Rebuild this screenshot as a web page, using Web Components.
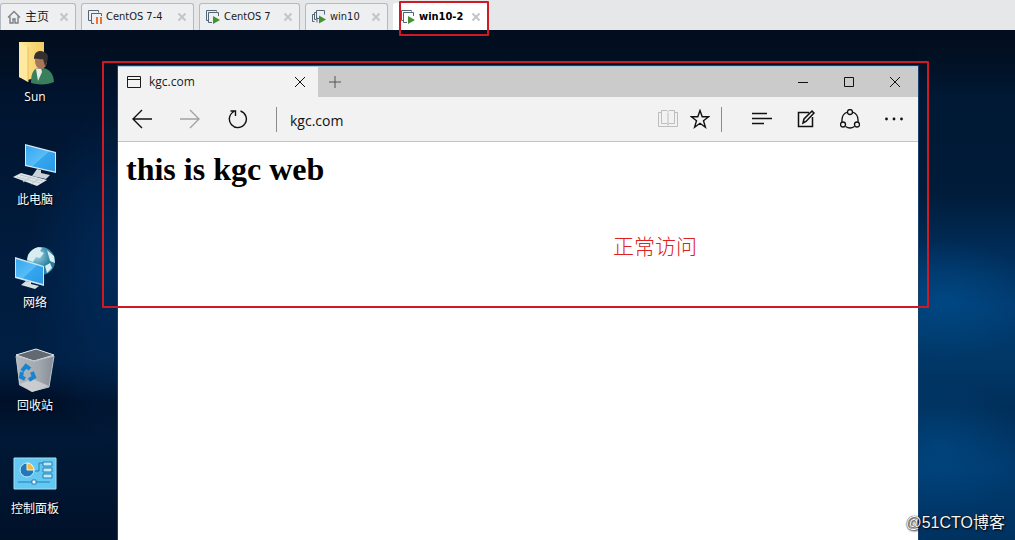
<!DOCTYPE html>
<html lang="zh-CN">
<head>
<meta charset="utf-8">
<title>win10-2</title>
<style>
html, body { margin: 0; min-height: 100%; }
body { font-family: "Open Sans", "Noto Sans CJK SC", sans-serif; font-size: 12px; }
</style>
</head>
<body>
<vm-console></vm-console>

<script>
const define = (name, html, ready) => {
  const template = document.createElement('template');
  template.innerHTML = html;
  customElements.define(name, class extends HTMLElement {
    constructor() {
      super();
      this.attachShadow({ mode: 'open' }).append(template.content.cloneNode(true));
    }
    connectedCallback() { if (ready) ready(this, this.shadowRoot); }
  });
};

const line = (size, body, width = 1) =>
  `<svg width="${size}" height="${size}" viewBox="0 0 ${size} ${size}" fill="none" stroke="currentColor" stroke-width="${width}" aria-hidden="true">${body}</svg>`;
const art = body => `<svg width="48" height="48" viewBox="0 0 48 48" aria-hidden="true">
  <defs>
    <linearGradient id="screen" x1="0" y1="0" x2="1" y2="1"><stop offset="0" stop-color="#35a5ee"/><stop offset=".5" stop-color="#58bdf8"/><stop offset=".52" stop-color="#35a6f0"/><stop offset="1" stop-color="#2b98e6"/></linearGradient>
    <linearGradient id="folder"><stop offset="0" stop-color="#ffe694"/><stop offset="1" stop-color="#f2cb62"/></linearGradient>
    <radialGradient id="globe" cx=".35" cy=".3"><stop offset="0" stop-color="#a4d8e8"/><stop offset="1" stop-color="#287f9f"/></radialGradient>
    <linearGradient id="bin"><stop offset="0" stop-color="#b3b8be"/><stop offset=".6" stop-color="#a2a8af"/><stop offset="1" stop-color="#858c96"/></linearGradient>
  </defs>${body}</svg>`;

const icons = {
  home: line(14, '<path d="M1 7.5 7 1.5l6 6M3 6.5V13h3V9h2v4h3V6.5" stroke="#7b8088" stroke-width="1.4"/>'),
  paused: line(14, '<path d="M3.5 10.500H.5V.5h10v2" stroke="#536475"/><path d="M6 13.500H3.500v-10h10V6" stroke="#536475"/><path d="M8 7h2v7H8zM12 7h2v7h-2z" fill="#ed7430" stroke="none"/>'),
  running: line(14, '<path d="M2.500 10.500H.5V.5h10v1" stroke="#536475"/><path d="M6 12.500H2.500v-10h10V6" stroke="#536475"/><path d="M7 6l7 4-7 4z" fill="#43922f" stroke="none"/>'),
  clone: line(14, '<path d="M2.500 11.500H.5v-7h2M4.500 9.500h-2v-7h2M7 8.500H4.500v-8h8v4M5 12.500v-5" stroke="#536475"/><path d="M7 5.500l7 4-7 4z" fill="#43922f" stroke="none"/>'),
  cross: line(10, '<path d="M1.500 1.500l7 7M8.500 1.500l-7 7"/>', 2),
  page: line(14, '<path d="M.5 1.500h13v11H.5zM.5 4.500h13"/>'),
  close: line(12, '<path d="M1 1l10 10M11 1 1 11"/>'),
  plus: line(12, '<path d="M6 0v12M0 6h12"/>'),
  minimize: line(12, '<path d="M1 6.500h10"/>'),
  maximize: line(12, '<path d="M1.500 1.500h9v9h-9z"/>'),
  back: line(20, '<path d="M20 10H1M10 1l-9 9 9 9"/>', 1.4),
  forward: line(20, '<path d="M0 10h19M10 1l9 9-9 9"/>', 1.4),
  refresh: line(20, '<path d="M12.500 2a8.500 8.500 0 1 1-6.500.5M2.500 2h5v5" />', 1.4),
  book: line(20, '<path d="M3 3.500H.5v14h19v-14H17M10 3.500v13M3.500 1.500H9l1 1 1-1h5.500v13H11l-1 1-1-1H3.500z"/>'),
  star: line(20, '<path d="M10 1.500l2.200 6.200h6.500l-5.200 4 1.900 6.500-5.400-3.900-5.400 3.900 1.900-6.500-5.200-4h6.500z"/>', 1.4),
  hub: line(20, '<path d="M0 4.500h15M0 9.500h20M0 14.500h12"/>', 1.3),
  note: line(20, '<path d="M13 3.500H2.500v14h14V8M7 14l1-4L16 2l2 2-8 8.500z"/>', 1.5),
  share: line(20, '<path d="M7.500 3C3 4.500 1.500 8 2 13M12.500 3c4.500 1.500 6 5 5.500 10M5.500 17.500c3 2 6 2 9 0"/><circle cx="10" cy="3" r="2.500"/><circle cx="3" cy="15.500" r="2.500"/><circle cx="17" cy="15.500" r="2.500"/>', 1.3),
  more: line(20, '<g fill="currentColor" stroke="none"><circle cx="2.500" cy="10" r="1.400"/><circle cx="10" cy="10" r="1.400"/><circle cx="17.500" cy="10" r="1.400"/></g>'),
  user: art(`<path d="M8 3h25v34l-17 4-8-3z" fill="url(#folder)"/><path d="M8 3l9 5v35l-9-5z" fill="#ffe9a0"/><path d="M17 8v35" stroke="#e8bd55"/>
    <path d="M20 44c0-11 3-15 9-15 8-1 14 5 14 14-6 3-16 3-23 1z" fill="#397f5c"/><path d="M25 30l5-1 1 4-4 9z" fill="#e7eeea"/><ellipse cx="30" cy="22" rx="6" ry="8" fill="#a9765a"/><path d="M23 20c0-8 6-9 10-7 5 1 5 8 1 14l-2-7c-3 1-5-1-9 0z" fill="#33302f"/>`),
  computer: art(`<path d="M14 2l31 8v21l-31-7z" fill="#d9eaf3"/><path d="M15 3.500l29 7.500v18.500l-29-6.500z" fill="url(#screen)"/>
    <path d="M26 27l4 1v3l9 2-4 4-14-3z" fill="#c8d2d9"/><path d="M2 35l8-4 26 7-10 6z" fill="#dfe5e9"/><path d="M6 35l23 6M9 33l23 6M12 40l8-5M20 42l8-5" stroke="#bcc7cf"/>`),
  network: art(`<circle cx="30" cy="16" r="14" fill="url(#globe)"/><path d="M17 10c4-7 11-9 14-7l-2 3 4 2-4 5-4-1-3 5-6-2zM36 5l7 6 1 7-5-2zM34 21l5-3 2 5-5 5z" fill="#d9edf0"/>
    <path d="M4 12l29 9v20L4 33z" fill="#cbe5f3"/><path d="M5 14l27 8v17L5 31.500z" fill="url(#screen)"/><path d="M15 36l5 1v2l8 2-4 3-14-4z" fill="#d8dfe3"/>`),
  recycle: art(`<path d="M5 7l20-6 18 6-5 32-17 5-13-7z" fill="url(#bin)"/><path d="M5 7l20-6 18 6-20 6z" fill="#616973" stroke="#dfe3e7"/><path d="M5 8l18 5 20-5-5 31-16 4-13-6z" fill="none" stroke="#bfc4c9"/><path d="M9 36l13-5 16 7-17 6z" fill="#d9d9da" opacity=".7"/>
    <g fill="none" stroke="#1884ce" stroke-width="4"><path d="M11 23l4-5 4 3M21 24l2 5-5 3M14 31l-4-2 1-5"/></g>`),
  control: art(`<path d="M3 7h42v31H3z" fill="#64c8f3" stroke="#a4e1f6"/><circle cx="16" cy="19" r="7" fill="#2379b7" stroke="#c1ecfb"/><path d="M16 19v-7a7 7 0 0 1 7 7z" fill="#f2b94d" stroke="#fff1ba"/>
    <path d="M24 20h4v-8h4M7 31h32" fill="none" stroke="#2181b7"/><path d="M32 11h9v4h-9zM32 17h9v4h-9zM32 23h9v4h-9z" fill="#bceafa" stroke="#257fae"/><path d="M21 29h4v4h-4z" fill="#fff" stroke="#257fae"/>`)
};

define('ui-icon', `
<style>:host { display: block; flex: none; line-height: 0; } svg { display: block; }</style>
<span></span>`, (host, root) => { root.querySelector('span').innerHTML = icons[host.getAttribute('name')]; });

define('icon-button', `
<style>
:host { display: flex; flex: none; color: #111; }
button { flex: 1; display: flex; align-items: center; justify-content: center; padding: 0; border: 0; background: none; color: inherit; }
</style>
<button type="button"><slot></slot></button>`, (host, root) => {
  root.querySelector('button').setAttribute('aria-label', host.getAttribute('label'));
});

define('vm-tab', `
<style>
:host { box-sizing: border-box; display: flex; align-items: center; height: 27px; padding: 0 6px; border: 1px solid #b3bac3; border-bottom: 0; border-radius: 3px 3px 0 0; background: #eeeff0; color: #1b1b1b; }
:host([active]) { padding: 0 6px 0 7px; border-color: #fff; background: #fff; font-weight: 700; color: #000; }
.pick { flex: 1; display: flex; align-items: center; gap: 4px; padding: 0; border: 0; background: none; color: inherit; font: inherit; white-space: nowrap; }
icon-button { width: 10px; color: #c3c5c7; }
</style>
<button class="pick" type="button"><slot name="icon"></slot><slot></slot></button>
<icon-button label="关闭"><ui-icon name="cross"></ui-icon></icon-button>`);

define('vm-tabs', `
<style>
:host { display: flex; align-items: flex-end; gap: 5px; height: 30px; background: #e6e7e8; font: 11px/16px "DejaVu Sans Condensed", "Noto Sans CJK SC", sans-serif; }
.home { width: 76px; font-size: 12px; } .wide { width: 113px; } .mid { width: 101px; } .short { width: 83px; }
.current { position: relative; width: 95px; }
.current red-frame { inset: -2px -1px -6px 6px; }
</style>
<vm-tab class="home"><ui-icon slot="icon" name="home"></ui-icon>主页</vm-tab>
<vm-tab class="wide"><ui-icon slot="icon" name="paused"></ui-icon>CentOS 7-4</vm-tab>
<vm-tab class="mid"><ui-icon slot="icon" name="running"></ui-icon>CentOS 7</vm-tab>
<vm-tab class="short"><ui-icon slot="icon" name="clone"></ui-icon>win10</vm-tab>
<div class="current"><vm-tab active><ui-icon slot="icon" name="running"></ui-icon>win10-2</vm-tab><red-frame></red-frame></div>`);

define('red-frame', `
<style>:host { position: absolute; z-index: 2; box-sizing: border-box; border: 2px solid #cf1a24; border-radius: 1px; pointer-events: none; }</style>`);

define('desktop-icon', `
<style>
:host { display: block; }
button { display: flex; flex-direction: column; align-items: center; width: 100%; padding: 0; border: 0; background: none; font: inherit; line-height: 20px; color: #fff; text-shadow: 1px 1px 2px #000; white-space: nowrap; }
</style>
<button type="button"><slot name="icon"></slot><slot></slot></button>`);

define('edge-titlebar', `
<style>
:host { display: flex; height: 30px; background: #cbcbcb; }
.tab { box-sizing: border-box; display: flex; align-items: center; width: 200px; padding: 0 12px 0 9px; gap: 8px; background: #f2f2f2; color: #1b1b1b; line-height: 30px; }
.tab span { flex: 1; }
.tab icon-button { width: 12px; }
.add { width: 34px; color: #555; }
.system { display: flex; margin-left: auto; }
.system icon-button { width: 46px; }
</style>
<div class="tab"><ui-icon name="page"></ui-icon><span>kgc.com</span><icon-button label="关闭标签页"><ui-icon name="close"></ui-icon></icon-button></div>
<icon-button class="add" label="新建标签页"><ui-icon name="plus"></ui-icon></icon-button>
<div class="system">
  <icon-button label="最小化"><ui-icon name="minimize"></ui-icon></icon-button>
  <icon-button label="最大化"><ui-icon name="maximize"></ui-icon></icon-button>
  <icon-button label="关闭"><ui-icon name="close"></ui-icon></icon-button>
</div>`);

define('edge-toolbar', `
<style>
:host { display: flex; align-items: center; height: 44px; padding-right: 2px; border-bottom: 1px solid #c4c4c4; background: #f2f2f2; }
icon-button { height: 44px; }
.nav { width: 48px; } .page { width: 32px; } .tool { width: 44px; }
.off { color: #a3a3a3; } .faint { color: #bdbdbd; }
i { width: 1px; height: 25px; background: #8b8b8b; }
.first { margin: 0 13px 0 14px; } .second { margin: 0 18px 0 5px; }
input { flex: 1; min-width: 0; height: 30px; padding: 2px 0 0; box-sizing: border-box; border: 0; outline: 0; background: none; color: #111; font: 14px/28px "Open Sans", sans-serif; }
</style>
<icon-button class="nav" label="后退"><ui-icon name="back"></ui-icon></icon-button>
<icon-button class="nav off" label="前进"><ui-icon name="forward"></ui-icon></icon-button>
<icon-button class="nav" label="刷新"><ui-icon name="refresh"></ui-icon></icon-button>
<i class="first"></i>
<input type="text" aria-label="地址" value="kgc.com" spellcheck="false">
<icon-button class="page faint" label="阅读视图"><ui-icon name="book"></ui-icon></icon-button>
<icon-button class="page" label="收藏"><ui-icon name="star"></ui-icon></icon-button>
<i class="second"></i>
<icon-button class="tool" label="中心"><ui-icon name="hub"></ui-icon></icon-button>
<icon-button class="tool" label="做笔记"><ui-icon name="note"></ui-icon></icon-button>
<icon-button class="tool" label="共享"><ui-icon name="share"></ui-icon></icon-button>
<icon-button class="tool" label="更多"><ui-icon name="more"></ui-icon></icon-button>`);

define('edge-window', `
<style>
:host { display: flex; flex-direction: column; position: relative; border-top: 1px solid #a9c8e4; background: #fff; box-shadow: 0 0 0 1px #16426d; }
red-frame { inset: -6px -11px auto -16px; height: 247px; }
</style>
<edge-titlebar></edge-titlebar>
<edge-toolbar></edge-toolbar>
<slot></slot>
<red-frame></red-frame>`);

define('web-page', `
<style>
:host { display: block; padding: 8px; color: #000; }
h1 { margin: 0; font: 700 32px/38px "Liberation Serif", serif; }
p { margin: 42px 213px 0 0; text-align: right; font: 300 21px/30px "Noto Sans CJK SC", sans-serif; color: #df2020; }
</style>
<h1>this is kgc web</h1>
<p>正常访问</p>`);

define('win-desktop', `
<style>
:host {
  position: relative; flex: 1; box-sizing: border-box; display: flex; gap: 48px; padding: 9px 97px 0 0;
  background:
    linear-gradient(180deg, #020e1f 0, #020e1fcc 25px, transparent 65px),
    radial-gradient(90px 60px at 945px 270px, #00508f99, transparent),
    radial-gradient(80px 70px at 940px 420px, #00508f77, transparent),
    linear-gradient(180deg, #00162f 0, #001c3a 32%, #002c58 43%, #003b70 54%, #003766 66%, #002f5a 74%, #003b70 86%, #003260) right / 97px 100% no-repeat,
    radial-gradient(90px 170px at 115px 48%, #002a58, transparent),
    linear-gradient(180deg, #001129, #001c3e 45%, #001f43 65%, #001028 73%, #001936 80%, #00112a);
}
nav { display: flex; flex-direction: column; gap: 35px; width: 70px; }
edge-window { flex: 1; min-width: 0; margin-top: 27px; }
.mark { position: absolute; right: 10px; bottom: 5px; z-index: 3; font: 16px/24px "Liberation Sans", "Noto Sans CJK SC", sans-serif; color: #f5f5f5; text-shadow: 0 0 1px #000, 1px 1px 2px #000; }
</style>
<nav aria-label="桌面">
  <desktop-icon><ui-icon slot="icon" name="user"></ui-icon>Sun</desktop-icon>
  <desktop-icon><ui-icon slot="icon" name="computer"></ui-icon>此电脑</desktop-icon>
  <desktop-icon><ui-icon slot="icon" name="network"></ui-icon>网络</desktop-icon>
  <desktop-icon><ui-icon slot="icon" name="recycle"></ui-icon>回收站</desktop-icon>
  <desktop-icon><ui-icon slot="icon" name="control"></ui-icon>控制面板</desktop-icon>
</nav>
<edge-window><web-page></web-page></edge-window>
<div class="mark">@51CTO博客</div>`);

define('vm-console', `
<style>:host { display: flex; flex-direction: column; min-height: 100vh; }</style>
<vm-tabs></vm-tabs>
<win-desktop></win-desktop>`);
</script>
</body>
</html>
